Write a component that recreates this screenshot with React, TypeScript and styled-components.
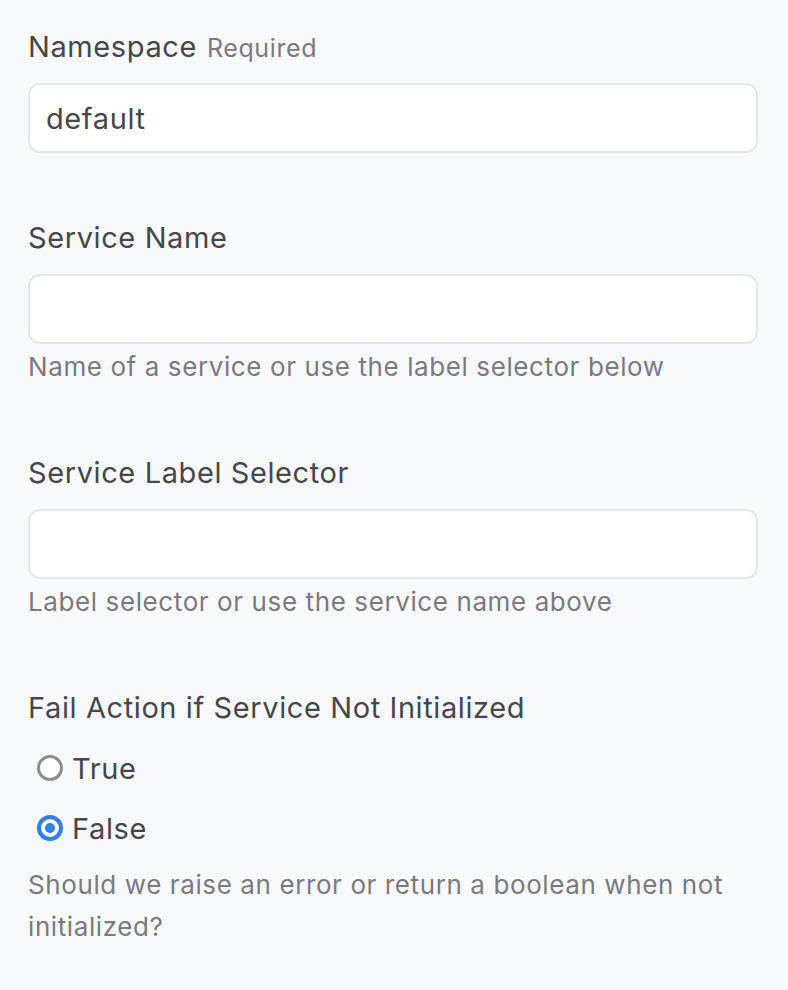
import React, { useState } from 'react';
import styled, { createGlobalStyle } from 'styled-components';

const GlobalStyle = createGlobalStyle`
  html, body {
    margin: 0;
    padding: 0;
    background: #f8f9fb;
  }
  body {
    font-family: Inter, "Noto Sans", "Liberation Sans", sans-serif;
    -webkit-font-smoothing: antialiased;
  }
`;

const Form = styled.form`
  display: flex;
  flex-direction: column;
  gap: 66px;
  padding: 28px 30px 40px 28px;
  min-height: 990px;
  box-sizing: border-box;
  background: #f8f9fb;
`;

const Field = styled.div`
  display: flex;
  flex-direction: column;
`;

const Label = styled.label`
  display: block;
  font-size: 29px;
  line-height: 38px;
  letter-spacing: 0.6px;
  color: #46464c;
  font-weight: 400;
`;

const Required = styled.span`
  font-size: 25px;
  line-height: 1;
  letter-spacing: 0.6px;
  color: #7a7a80;
  margin-left: 10px;
`;

const Input = styled.input`
  margin-top: 17px;
  height: 70px;
  box-sizing: border-box;
  width: 100%;
  border: 2px solid #e6e7eb;
  border-radius: 12px;
  background: #fff;
  padding: 0 16px;
  font-family: inherit;
  font-size: 29px;
  letter-spacing: 0.6px;
  color: #46464c;
  outline: none;
`;

const Help = styled.p`
  margin: 2px 0 0;
  font-size: 26px;
  line-height: 42px;
  letter-spacing: 0.6px;
  color: #7a7a80;
`;

const RadioGroup = styled.div`
  display: flex;
  flex-direction: column;
  margin-top: 11px;
  margin-bottom: 4px;
`;

const RadioRow = styled.label`
  display: flex;
  align-items: center;
  height: 60px;
  padding-left: 9px;
  gap: 9px;
  font-size: 29px;
  letter-spacing: 0.6px;
  color: #46464c;
  cursor: pointer;
`;

const RadioDot = styled.span<{ $checked: boolean }>`
  width: 26px;
  height: 26px;
  flex: none;
  box-sizing: border-box;
  border-radius: 50%;
  background: #fff;
  border: ${p => (p.$checked ? '4px solid #2f7ff0' : '3px solid #8d8d93')};
  display: flex;
  align-items: center;
  justify-content: center;
  &::after {
    content: '';
    display: ${p => (p.$checked ? 'block' : 'none')};
    width: 10px;
    height: 10px;
    border-radius: 50%;
    background: #2f7ff0;
  }
`;

const HiddenRadio = styled.input`
  display: none;
`;

const App = () => {
  const [failAction, setFailAction] = useState<'true' | 'false'>('false');

  return (
    <>
      <GlobalStyle />
      <Form onSubmit={e => e.preventDefault()}>
        <Field>
          <Label>
            Namespace<Required>Required</Required>
          </Label>
          <Input defaultValue="default" />
        </Field>

        <Field>
          <Label>Service Name</Label>
          <Input />
          <Help>Name of a service or use the label selector below</Help>
        </Field>

        <Field>
          <Label>Service Label Selector</Label>
          <Input />
          <Help>Label selector or use the service name above</Help>
        </Field>

        <Field>
          <Label>Fail Action if Service Not Initialized</Label>
          <RadioGroup>
            {(['true', 'false'] as const).map(v => (
              <RadioRow key={v}>
                <HiddenRadio
                  type="radio"
                  name="failAction"
                  checked={failAction === v}
                  onChange={() => setFailAction(v)}
                />
                <RadioDot $checked={failAction === v} />
                {v === 'true' ? 'True' : 'False'}
              </RadioRow>
            ))}
          </RadioGroup>
          <Help>Should we raise an error or return a boolean when not initialized?</Help>
        </Field>
      </Form>
    </>
  );
};

export default App;
